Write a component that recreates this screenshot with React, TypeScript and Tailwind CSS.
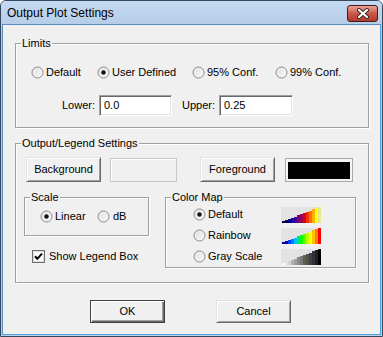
import React from "react";

const defaultMap = ["#000030","#000060","#000090","#1010a0","#400090","#700080","#a00050","#d00020","#f03000","#ff7000","#ffb000","#ffff00","#e8e890"];
const rainbowMap = ["#000080","#0000d0","#0040ff","#0080ff","#00c0ff","#00e080","#00ff00","#60ff00","#c0ff00","#ffff00","#ffc000","#ff8000","#ff0000"];
const grayMap = ["#ffffff","#d8e8e0","#c8d8d0","#b0b0b0","#a0a0a0","#8a8a8a","#787878","#606048","#505050","#404040","#303040","#202020","#000000"];

function Ramp({ colors }: { colors: string[] }) {
  return (
    <svg width="40" height="16" viewBox="0 0 40 16" className="shrink-0 block">
      <rect x="0" y="0" width="40" height="16" fill="#e3e3e3" />
      {colors.map((c, i) => {
        const h = Math.round(1.5 + (i * 14.5) / 12);
        return <rect key={i} x={1 + i * 3} y={16 - h} width="3" height={h} fill={c} />;
      })}
    </svg>
  );
}

function Radio({ checked }: { checked?: boolean }) {
  return (
    <svg width="13" height="13" viewBox="0 0 13 13" className="shrink-0 block">
      <defs>
        <linearGradient id="rgrad" x1="0" y1="0" x2="1" y2="1">
          <stop offset="0" stopColor="#d8d8d8" />
          <stop offset="1" stopColor="#ffffff" />
        </linearGradient>
      </defs>
      <circle cx="6.5" cy="6.5" r="5.5" fill="url(#rgrad)" stroke="#8a8a8a" />
      <circle cx="6.5" cy="6.5" r="4" fill="none" stroke="#f4f4f4" strokeWidth="1" />
      {checked && <circle cx="6.5" cy="6.5" r="2.2" fill="#141414" />}
    </svg>
  );
}

function Check() {
  return (
    <svg width="13" height="13" viewBox="0 0 13 13" className="shrink-0 block">
      <rect x="0.5" y="0.5" width="12" height="12" fill="#f6f6f6" stroke="#707070" />
      <rect x="1.5" y="1.5" width="10" height="10" fill="#ffffff" stroke="#dcdcdc" />
      <path d="M3 6.3 L5.3 8.8 L10 3.6" fill="none" stroke="#000" strokeWidth="2" />
    </svg>
  );
}

function Group({ label, className, children }: { label: string; className: string; children?: React.ReactNode }) {
  return (
    <div className={"relative border border-[#a0a0a0] shadow-[inset_1px_1px_0_#fff,1px_1px_0_#fff] " + className}>
      <span className="absolute -top-[7px] left-[5px] px-[1px] bg-[#f0f0f0] text-[11px] leading-[13px]">{label}</span>
      {children}
    </div>
  );
}

function Btn({ children, className, def }: { children: React.ReactNode; className: string; def?: boolean }) {
  const style = def
    ? "border border-[#404040] shadow-[inset_1px_1px_0_#fff,inset_-1px_-1px_0_#696969,inset_-2px_-2px_0_#a0a0a0]"
    : "border border-t-[#e3e3e3] border-l-[#e3e3e3] border-r-[#696969] border-b-[#696969] shadow-[inset_1px_1px_0_#fff,inset_-1px_-1px_0_#a0a0a0]";
  return (
    <div className={"flex items-center justify-center bg-[#f0f0f0] text-[11px] " + style + " " + className}>
      {children}
    </div>
  );
}

function Input({ value, className }: { value: string; className: string }) {
  return (
    <div className={"h-[21px] flex items-center pl-[4px] bg-white border border-t-[#a0a0a0] border-l-[#a0a0a0] border-r-[#fff] border-b-[#fff] shadow-[inset_1px_1px_0_#696969,inset_-1px_-1px_0_#e3e3e3] text-[11px] " + className}>
      {value}
    </div>
  );
}

export default function App() {
  return (
    <div className="w-[383px] h-[337px] flex flex-col bg-[#b9d1ea] border border-[#34475c] rounded-t-[6px] overflow-hidden font-['Liberation_Sans',Arial,sans-serif] text-black">
      <div className="h-[23px] flex items-start justify-between bg-gradient-to-b from-[#c4daf2] to-[#b6cde8]">
        <span className="pl-[6px] pt-[5px] text-[12px] leading-[14px]">Output Plot Settings</span>
        <div className="mt-[4px] mr-[4px] w-[31px] h-[17px] rounded-[3px] border border-[#4a1a1a] bg-gradient-to-b from-[#e8a493] via-[#c8584b] to-[#b23a2e] flex items-center justify-center">
          <svg width="14" height="11" viewBox="0 0 14 11">
            <path d="M3 2 L11 9 M11 2 L3 9" stroke="#3a2020" strokeWidth="4" strokeLinecap="round" />
            <path d="M3 2 L11 9 M11 2 L3 9" stroke="#ffffff" strokeWidth="2.2" strokeLinecap="round" />
          </svg>
        </div>
      </div>
      <div className="flex-1 mx-[1px] mb-[1px] border border-[#5a8cc4] border-b-[#4fa0e0] border-r-[#4fa0e0] bg-[#f0f0f0] flex flex-col pl-[12px] pt-[18px] text-[11px] leading-[13px]">
        <Group label="Limits" className="w-[354px] h-[85px]">
          <div className="flex items-center h-[16px] mt-[20px] pl-[15px]">
            <div className="w-[66px] flex items-center gap-[2px]"><Radio /><span>Default</span></div>
            <div className="w-[95px] flex items-center gap-[2px]"><Radio checked /><span>User Defined</span></div>
            <div className="w-[83px] flex items-center gap-[2px]"><Radio /><span>95% Conf.</span></div>
            <div className="flex items-center gap-[2px]"><Radio /><span>99% Conf.</span></div>
          </div>
          <div className="flex items-center mt-[15px] pl-[39px]">
            <span className="w-[40px] text-right">Lower:</span>
            <Input value="0.0" className="ml-[4px] w-[73px]" />
            <span className="w-[43px] text-right">Upper:</span>
            <Input value="0.25" className="ml-[4px] w-[74px]" />
          </div>
        </Group>
        <Group label="Output/Legend Settings" className="mt-[15px] w-[354px] h-[140px]">
          <div className="flex items-center mt-[13px] pl-[10px]">
            <Btn className="w-[75px] h-[25px]">Background</Btn>
            <div className="ml-[9px] w-[67px] h-[24px] border border-[#c8c8c8] shadow-[inset_1px_1px_0_#fff]" />
            <Btn className="ml-[23px] w-[75px] h-[25px]">Foreground</Btn>
            <div className="ml-[10px] w-[68px] h-[24px] border border-[#a8a8a8] bg-[#f4f4f4] px-[2px] pt-[3px] pb-[2px] flex">
              <div className="flex-1 bg-black" />
            </div>
          </div>
          <div className="flex items-start mt-[15px] pl-[8px]">
            <div className="w-[125px] flex flex-col">
              <Group label="Scale" className="w-[125px] h-[39px]">
                <div className="flex items-center mt-[12px] pl-[15px]">
                  <div className="w-[57px] flex items-center gap-[2px]"><Radio checked /><span>Linear</span></div>
                  <div className="flex items-center gap-[3px]"><Radio /><span>dB</span></div>
                </div>
              </Group>
              <div className="flex items-center gap-[4px] mt-[14px] pl-[8px]">
                <Check />
                <span>Show Legend Box</span>
              </div>
            </div>
            <Group label="Color Map" className="ml-[16px] w-[191px] h-[71px]">
              <div className="flex flex-col pt-[6px]">
                {[
                  { l: "Default", c: defaultMap, on: true },
                  { l: "Rainbow", c: rainbowMap, on: false },
                  { l: "Gray Scale", c: grayMap, on: false },
                ].map((r) => (
                  <div key={r.l} className="h-[21px] flex items-center pl-[27px]">
                    <Radio checked={r.on} />
                    <span className="ml-[2px] w-[73px]">{r.l}</span>
                    <Ramp colors={r.c} />
                  </div>
                ))}
              </div>
            </Group>
          </div>
        </Group>
        <div className="flex mt-[17px] pl-[75px] gap-[51px]">
          <Btn def className="w-[75px] h-[23px]">OK</Btn>
          <Btn className="w-[75px] h-[23px]">Cancel</Btn>
        </div>
      </div>
    </div>
  );
}
